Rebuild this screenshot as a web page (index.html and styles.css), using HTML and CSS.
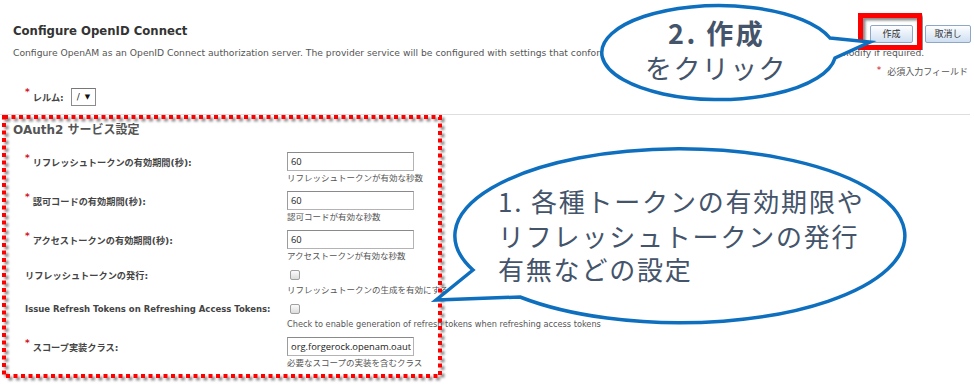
FILE: index.html
```html
<!DOCTYPE html>
<html lang="ja">
<head>
<meta charset="utf-8">
<title>Configure OpenID Connect</title>
<link rel="stylesheet" href="styles.css">
</head>
<body>
<div class="page">
  <div class="header">
    <h1 class="title">Configure OpenID Connect</h1>
    <div class="actions">
      <button class="btn btn-create">作成</button>
      <button class="btn btn-cancel">取消し</button>
    </div>
  </div>
  <p class="desc">Configure OpenAM as an OpenID Connect authorization server. The provider service will be configured with settings that conform to the OpenID Connect specification. Review and modify if required.</p>
  <div class="required-note"><span class="req">*</span> 必須入力フィールド</div>
  <div class="realm">
    <span class="realm-label"><span class="req">*</span>レルム:</span>
    <div class="select"><span>/</span><span class="arrow">▼</span></div>
  </div>
  <hr class="divider">
  <section class="section">
    <h2 class="section-title">OAuth2 サービス設定</h2>
    <div class="form">
      <div class="row">
        <div class="label"><span class="req">*</span>リフレッシュトークンの有効期間(秒):</div>
        <div class="field">
          <input class="input" type="text" value="60">
          <div class="help ja">リフレッシュトークンが有効な秒数</div>
        </div>
      </div>
      <div class="row">
        <div class="label"><span class="req">*</span>認可コードの有効期間(秒):</div>
        <div class="field">
          <input class="input" type="text" value="60">
          <div class="help ja">認可コードが有効な秒数</div>
        </div>
      </div>
      <div class="row">
        <div class="label"><span class="req">*</span>アクセストークンの有効期間(秒):</div>
        <div class="field">
          <input class="input" type="text" value="60">
          <div class="help ja">アクセストークンが有効な秒数</div>
        </div>
      </div>
      <div class="row row-check">
        <div class="label">リフレッシュトークンの発行:</div>
        <div class="field">
          <div class="check-line"><span class="check"></span></div>
          <div class="help ja">リフレッシュトークンの生成を有効にする</div>
        </div>
      </div>
      <div class="row row-check">
        <div class="label label-latin">Issue Refresh Tokens on Refreshing Access Tokens:</div>
        <div class="field">
          <div class="check-line"><span class="check"></span></div>
          <div class="help">Check to enable generation of refresh tokens when refreshing access tokens</div>
        </div>
      </div>
      <div class="row">
        <div class="label"><span class="req">*</span>スコープ実装クラス:</div>
        <div class="field">
          <input class="input" type="text" value="org.forgerock.openam.oauth2.provider.ScopeImpl">
          <div class="help ja">必要なスコープの実装を含むクラス</div>
        </div>
      </div>
    </div>
  </section>
</div>

<svg class="annot" width="974" height="390" viewBox="0 0 974 390">
  <defs>
    <filter id="shadow" x="-5%" y="-5%" width="110%" height="110%">
      <feDropShadow dx="2.5" dy="2.5" stdDeviation="0.8" flood-color="#000" flood-opacity="0.45"/>
    </filter>
  </defs>
  <rect class="dash-box" x="4" y="117" width="436" height="259"/>
  <rect class="red-box" x="860.5" y="15.5" width="59" height="32"/>
  <path class="bubble" d="M830 38 L870 42 L835 58 A117 47 0 1 1 830 38 Z"/>
  <text class="btext b2 strong" x="668" y="44">2. 作成</text>
  <text class="btext b2 kana" x="645" y="79">をクリック</text>
  <path class="bubble" d="M473 270 L436 300 L520 297 A225 87 0 1 0 473 270 Z"/>
  <text class="btext b1" x="498" y="212">1. 各種トークンの有効期限や</text>
  <text class="btext b1" x="498" y="247">リフレッシュトークンの発行</text>
  <text class="btext b1" x="498" y="280">有無などの設定</text>
</svg>
</body>
</html>
```

FILE: styles.css
```css
html, body {
  margin: 0;
  padding: 0;
}

body {
  width: 974px;
  height: 390px;
  overflow: hidden;
  position: relative;
  background: #ffffff;
  font-family: "DejaVu Sans", "Noto Sans CJK JP", sans-serif;
  color: #444;
}

.page {
  padding: 24px 3px 0 13px;
}

.header {
  display: flex;
  justify-content: space-between;
  align-items: flex-start;
  height: 19px;
}

.title {
  margin: 0;
  font-size: 11.7px;
  line-height: 15px;
  font-weight: bold;
  color: #333;
}

.actions {
  display: flex;
  gap: 12px;
  margin-top: 1px;
}

.btn {
  height: 18px;
  padding: 0;
  box-sizing: border-box;
  font-family: "Noto Sans CJK JP", sans-serif;
  font-size: 9px;
  line-height: 16px;
  color: #333;
  border: 1px solid #8ea7c6;
  border-radius: 2px;
  background: linear-gradient(#fdfeff, #cfdff2);
}

.btn-create {
  width: 43px;
}

.btn-cancel {
  width: 46px;
}

.desc {
  margin: 4px 0 0;
  font-size: 9.2px;
  line-height: 12px;
  color: #555;
  white-space: nowrap;
}

.required-note {
  margin-top: 7px;
  padding-right: 3px;
  text-align: right;
  font-size: 9px;
  line-height: 12px;
  color: #555;
}

.req {
  color: #d0101a;
  font-size: 9px;
  line-height: 9px;
  align-self: flex-start;
  margin-right: 3px;
  position: relative;
  top: -2px;
}

.realm {
  margin: 10px 0 0 12px;
  display: flex;
  align-items: center;
  gap: 7px;
  height: 18px;
}

.realm-label {
  display: flex;
  align-items: center;
  font-size: 9.2px;
  font-weight: bold;
  color: #444;
}

.select {
  width: 25px;
  height: 18px;
  box-sizing: border-box;
  border: 1px solid #8c8c8c;
  border-top-color: #777;
  background: #fff;
  display: flex;
  align-items: center;
  padding-left: 5px;
  gap: 5px;
  font-size: 9px;
  color: #222;
}

.select .arrow {
  font-size: 7px;
  color: #111;
}

.divider {
  margin: 8px 0 0 -13px;
  width: 970px;
  height: 0;
  border: 0;
  border-top: 1px solid #dedede;
}

.section-title {
  margin: 8px 0 0;
  font-size: 12px;
  line-height: 15px;
  font-weight: bold;
  color: #555;
}

.form {
  margin: 14px 0 0 12px;
}

.row {
  display: grid;
  grid-template-columns: 262px 1fr;
  margin-bottom: 7px;
}

.label {
  height: 19px;
  display: flex;
  align-items: center;
  font-size: 9.2px;
  font-weight: bold;
  color: #444;
  white-space: nowrap;
}

.label .req {
  align-self: auto;
  top: -3px;
}

.label-latin {
  font-size: 8.5px;
}

.row-check .label {
  height: 12px;
}

.field {
  display: flex;
  flex-direction: column;
  align-items: flex-start;
}

.input {
  display: block;
  margin: 0;
  width: 127px;
  height: 19px;
  box-sizing: border-box;
  padding: 0 2px 0 3px;
  border: 1px solid #b3b3b3;
  border-top-color: #8a8a8a;
  border-left-color: #9c9c9c;
  border-radius: 0;
  background: #fff;
  font-family: "Open Sans", sans-serif;
  font-size: 9.4px;
  color: #222;
  outline: none;
}

.check-line {
  height: 12px;
  display: flex;
  align-items: center;
}

.check {
  display: block;
  width: 10px;
  height: 10px;
  margin-left: 3px;
  box-sizing: border-box;
  border: 1px solid #a0a0a0;
  border-radius: 2px;
  background: linear-gradient(#fbfbfb, #dcdcdc);
}

.help {
  margin-top: 1px;
  font-size: 8.2px;
  line-height: 12px;
  color: #555;
  white-space: nowrap;
}

.help.ja {
  font-size: 8.5px;
}

.row-check .help {
  margin-top: 3px;
}

/* annotation overlay */
.annot {
  position: absolute;
  left: 0;
  top: 0;
  pointer-events: none;
}

.dash-box {
  fill: none;
  stroke: #ff0000;
  stroke-width: 4;
  stroke-dasharray: 4 3.5;
  filter: url(#shadow);
}

.red-box {
  fill: none;
  stroke: #ff0000;
  stroke-width: 5;
  filter: url(#shadow);
}

.bubble {
  fill: #ffffff;
  stroke: #0e6fbe;
  stroke-width: 3.5;
  stroke-linejoin: miter;
}

.btext {
  font-family: "Noto Sans CJK JP", sans-serif;
  fill: #44546a;
}

.b1 {
  font-size: 26px;
  letter-spacing: 1.8px;
}

.b2 {
  font-size: 27px;
  letter-spacing: 2.5px;
}

.b2.kana {
  letter-spacing: 1.4px;
}

.strong {
  font-weight: bold;
}
```
